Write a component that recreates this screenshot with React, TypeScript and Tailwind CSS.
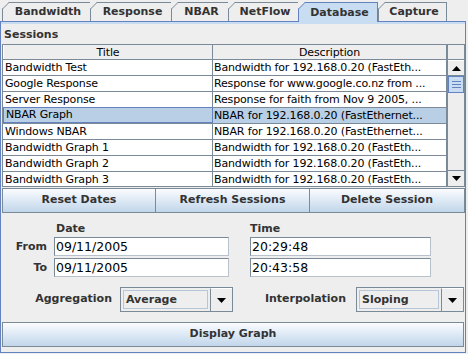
import React from "react";

const tabs = [
  { label: "Bandwidth", w: "w-[88px]" },
  { label: "Response", w: "w-[81px]" },
  { label: "NBAR", w: "w-[57px]" },
  { label: "NetFlow", w: "w-[70px]" },
  { label: "Database", w: "w-[80px]", selected: true },
  { label: "Capture", w: "w-[68px]" },
];

const rows = [
  ["Bandwidth Test", "Bandwidth for 192.168.0.20 (FastEth..."],
  ["Google Response", "Response for www.google.co.nz from ..."],
  ["Server Response", "Response for faith from Nov 9 2005, ..."],
  ["NBAR Graph", "NBAR for 192.168.0.20 (FastEthernet..."],
  ["Windows NBAR", "NBAR for 192.168.0.20 (FastEthernet..."],
  ["Bandwidth Graph 1", "Bandwidth for 192.168.0.20 (FastEth..."],
  ["Bandwidth Graph 2", "Bandwidth for 192.168.0.20 (FastEth..."],
  ["Bandwidth Graph 3", "Bandwidth for 192.168.0.20 (FastEth..."],
];

const Tab = ({ label, w, selected }: { label: string; w: string; selected?: boolean }) => (
  <div
    className={`relative h-[19px] ${w} border-l border-t flex items-center justify-center pl-[3px] pt-px text-[11px] font-bold text-[#333] ${
      selected ? "bg-[#c8ddf2] border-[#6382bf] h-[20px] -mb-px z-10 border-r" : "bg-[#eeeeee] border-[#7a8a99]"
    }`}
  >
    {/* cut corner, Metal style */}
    <svg className="absolute -left-px -top-px" width="7" height="7">
      <polygon points="0,0 7,0 0,7" fill="#eeeeee" />
      <line x1="0.5" y1="7" x2="7" y2="0.5" stroke={selected ? "#6382bf" : "#7a8a99"} />
    </svg>
    {label}
  </div>
);

const MetalButton = ({ children, className }: { children: React.ReactNode; className: string }) => (
  <div
    className={`flex items-center justify-center border border-[#7a8a99] bg-gradient-to-b from-[#fbfcfe] via-[#dde9f5] to-[#c2d6ea] text-[11px] font-bold text-[#333] ${className}`}
  >
    {children}
  </div>
);

const Field = ({ value }: { value: string }) => (
  <div className="h-[19px] border border-[#7a8a99] border-b-[#b8c2cc] border-r-[#b8c2cc] bg-white pl-px text-[12.5px] leading-[17px] text-black">
    {value}
  </div>
);

const Combo = ({ value, className }: { value: string; className: string }) => (
  <div className={`flex h-[25px] border border-[#7a8a99] bg-[#eeeeee] ${className}`}>
    <div className="flex-1 m-[2px] border border-[#b5c6d8] bg-[#eeeeee] pl-[2px] text-[11px] font-bold leading-[18px] text-[#333]">
      {value}
    </div>
    <div className="w-[22px] flex items-center justify-center border-l border-[#7a8a99] border-t border-t-white">
      <svg width="9" height="5">
        <polygon points="0,0 9,0 4.5,5" fill="#000" />
      </svg>
    </div>
  </div>
);

export default function App() {
  return (
    <div
      className="w-[468px] h-[354px] bg-[#eeeeee] overflow-hidden select-none"
      style={{ fontFamily: '"DejaVu Sans", sans-serif' }}
    >
      {/* tab strip */}
      <div className="flex items-end h-[21px] pl-[2px]">
        {tabs.map((t, i) => (
          <Tab key={i} {...t} />
        ))}
        <div className="h-[19px] border-l border-[#7a8a99]" />
      </div>

      {/* tab content */}
      <div className="w-[466px] h-[332px] border border-[#6382bf]">
        <div className="h-[2px] bg-[#c8ddf2]" />
        <div className="mt-[4px] ml-[3px] h-[14px] text-[11px] font-bold leading-[14px] text-[#333]">Sessions</div>

        {/* table */}
        <div className="mt-[2px] ml-px w-[463px] h-[143px] border border-[#7a8a99] flex bg-[#eeeeee]">
          <div className="w-[444px] flex flex-col">
            <div className="flex h-[15px] border-b border-[#7a8a99] text-[11px] leading-[15px] tracking-[-0.15px] text-black">
              <div className="w-[210px] text-center border-r border-[#7a8a99] border-l border-l-white">Title</div>
              <div className="flex-1 text-center border-r border-[#7a8a99]">Description</div>
            </div>
            <div className="h-[126px] overflow-hidden bg-white">
              {rows.map(([title, desc], i) => {
                const sel = i === 3;
                return (
                  <div
                    key={i}
                    className={`flex h-[16px] border-b border-[#7a8a99] text-[11px] leading-[16px] tracking-[-0.15px] text-black ${
                      sel ? "bg-[#b8cfe5]" : "bg-white"
                    }`}
                  >
                    <div
                      className={`w-[210px] pl-[2px] whitespace-nowrap overflow-hidden border-r border-[#7a8a99] ${
                        sel ? "border border-[#6382bf] -mt-px h-[16px] leading-[14px]" : ""
                      }`}
                    >
                      {title}
                    </div>
                    <div className="flex-1 pl-px whitespace-nowrap overflow-hidden border-r border-[#7a8a99]">{desc}</div>
                  </div>
                );
              })}
            </div>
          </div>

          {/* scrollbar */}
          <div className="flex-1 flex flex-col border-l border-[#7a8a99]">
            <div className="h-[15px] border-b border-[#7a8a99]" />
            <div className="h-[16px] flex items-center justify-center border-b border-[#7a8a99] border-t border-t-white">
              <svg width="9" height="5">
                <polygon points="4.5,0 9,5 0,5" fill="#000" />
              </svg>
            </div>
            <div className="h-[17px] bg-[#c8ddf2] border border-[#6382bf] flex flex-col items-center justify-center gap-[2px]">
              <div className="w-[9px] h-px bg-[#6382bf]" />
              <div className="w-[9px] h-px bg-[#6382bf]" />
              <div className="w-[9px] h-px bg-[#6382bf]" />
            </div>
            <div className="flex-1" />
            <div className="h-[16px] flex items-center justify-center border-t border-[#7a8a99]">
              <svg width="9" height="5">
                <polygon points="0,0 9,0 4.5,5" fill="#000" />
              </svg>
            </div>
          </div>
        </div>

        {/* session buttons */}
        <div className="mt-px ml-px flex h-[25px]">
          <MetalButton className="w-[154px]">Reset Dates</MetalButton>
          <MetalButton className="w-[155px] -ml-px">Refresh Sessions</MetalButton>
          <MetalButton className="w-[156px] -ml-px">Delete Session</MetalButton>
        </div>

        {/* dates */}
        <div className="mt-[9px] flex h-[14px] text-[11px] font-bold leading-[14px] text-[#333]">
          <div className="ml-[55px] w-[194px]">Date</div>
          <div>Time</div>
        </div>
        <div className="mt-px grid grid-cols-[46px_175px_195px] gap-x-[7px] gap-y-[2px] text-[11px]">
          <div className="text-right font-bold text-[#333] leading-[19px]">From</div>
          <Field value="09/11/2005" />
          <div className="pl-[14px]">
            <Field value="20:29:48" />
          </div>

          <div className="text-right font-bold text-[#333] leading-[19px]">To</div>
          <Field value="09/11/2005" />
          <div className="pl-[14px]">
            <Field value="20:43:58" />
          </div>
        </div>

        {/* aggregation / interpolation */}
        <div className="mt-[10px] flex items-center h-[25px] text-[11px] font-bold text-[#333]">
          <div className="w-[111px] text-right">Aggregation</div>
          <Combo value="Average" className="ml-[8px] w-[113px]" />
          <div className="w-[113px] text-right">Interpolation</div>
          <Combo value="Sloping" className="ml-[10px] w-[108px]" />
        </div>

        <MetalButton className="mt-[10px] ml-px w-[462px] h-[25px]">Display Graph</MetalButton>
      </div>
    </div>
  );
}
